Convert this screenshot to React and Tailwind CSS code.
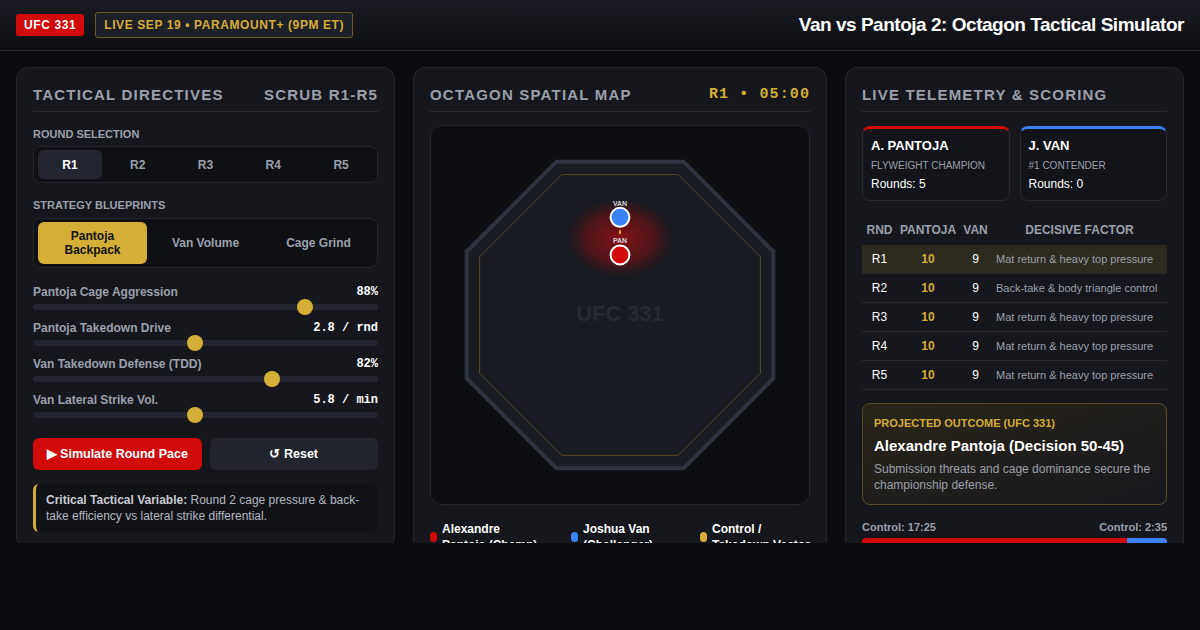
import { useState } from 'react'

const rounds = ['R1', 'R2', 'R3', 'R4', 'R5']

const blueprints = ['Pantoja Backpack', 'Van Volume', 'Cage Grind']

const sliders = [
  { label: 'Pantoja Cage Aggression', value: '88%', pos: 0.8 },
  { label: 'Pantoja Takedown Drive', value: '2.8 / rnd', pos: 0.467 },
  { label: 'Van Takedown Defense (TDD)', value: '82%', pos: 0.7 },
  { label: 'Van Lateral Strike Vol.', value: '5.8 / min', pos: 0.467 },
]

const scorecard = [
  { rnd: 'R1', pan: 10, van: 9, factor: 'Mat return & heavy top pressure' },
  { rnd: 'R2', pan: 10, van: 9, factor: 'Back-take & body triangle control' },
  { rnd: 'R3', pan: 10, van: 9, factor: 'Mat return & heavy top pressure' },
  { rnd: 'R4', pan: 10, van: 9, factor: 'Mat return & heavy top pressure' },
  { rnd: 'R5', pan: 10, van: 9, factor: 'Mat return & heavy top pressure' },
]

// octagon points, flat top, centred in a 381 box
function octagon(c, a) {
  const s = a * Math.tan(Math.PI / 8)
  return [
    [c - s, c - a], [c + s, c - a], [c + a, c - s], [c + a, c + s],
    [c + s, c + a], [c - s, c + a], [c - a, c + s], [c - a, c - s],
  ].map(p => p.join(',')).join(' ')
}

function PanelHeader({ left, right, rightClass }) {
  return (
    <div className="flex items-center justify-between border-b border-[#272a33] pt-[1px] pb-[6px]">
      <h2 className="text-[15px] leading-5 font-bold uppercase tracking-[1.2px] text-[#9ca0ab]">{left}</h2>
      {right && <span className={rightClass}>{right}</span>}
    </div>
  )
}

function OctagonMap() {
  return (
    <svg viewBox="0 0 381 381" className="block h-full w-full">
      <defs>
        <radialGradient id="glow" cx="50%" cy="50%" r="50%">
          <stop offset="0%" stopColor="#d10a0a" stopOpacity="0.6" />
          <stop offset="65%" stopColor="#a00a0a" stopOpacity="0.38" />
          <stop offset="100%" stopColor="#7a0808" stopOpacity="0.02" />
        </radialGradient>
      </defs>
      <polygon points={octagon(190.5, 154.5)} fill="#1a1c23" stroke="#2f3441" strokeWidth="4" />
      <polygon points={octagon(190.5, 141.5)} fill="none" stroke="#5a4b22" strokeWidth="1" />
      <text x="190.5" y="197" textAnchor="middle" fontSize="22" fontWeight="700" fill="#262a33" fontFamily="Liberation Sans, Arial, sans-serif">UFC 331</text>
      <ellipse cx="190.5" cy="113" rx="53" ry="39" fill="url(#glow)" />
      <rect x="189.5" y="105" width="2" height="4" fill="#d4af37" />
      <text x="190.5" y="81" textAnchor="middle" fontSize="7" fontWeight="700" fill="#d1d5db" fontFamily="Liberation Sans, Arial, sans-serif">VAN</text>
      <circle cx="190.5" cy="92" r="9.5" fill="#3b82f6" stroke="#ffffff" strokeWidth="2" />
      <text x="190.5" y="118" textAnchor="middle" fontSize="7" fontWeight="700" fill="#d1d5db" fontFamily="Liberation Sans, Arial, sans-serif">PAN</text>
      <circle cx="190.5" cy="130" r="9.5" fill="#d10a0a" stroke="#ffffff" strokeWidth="2" />
    </svg>
  )
}

export default function App() {
  const [round, setRound] = useState('R1')
  const [blueprint, setBlueprint] = useState('Pantoja Backpack')

  return (
    <div className="min-h-screen bg-[#0b0c10] font-['Liberation_Sans',Arial,sans-serif] text-white">
      <header className="flex h-[51px] items-center justify-between border-b border-[#272a33] bg-gradient-to-b from-[#1a1c23] to-[#0e0f13] px-4">
        <div className="flex items-center gap-[11px]">
          <span className="rounded-[3px] bg-[#d10a0a] px-2 py-[4px] text-[12px] leading-[14px] font-bold tracking-wider text-white">UFC 331</span>
          <span className="rounded-[3px] border border-[#6e5b26] bg-[#1e2028] px-2 py-[5px] text-[12px] leading-[14px] font-bold tracking-wider text-[#d4af37]">LIVE SEP 19 • PARAMOUNT+ (9PM ET)</span>
        </div>
        <h1 className="text-[19px] font-bold tracking-tight text-white">Van vs Pantoja 2: Octagon Tactical Simulator</h1>
      </header>

      <main className="h-[492px] overflow-hidden px-4 pt-4">
        <div className="grid grid-cols-[379px_414px_1fr] items-start gap-[18px]">
          {/* left */}
          <section className="rounded-xl border border-[#23262e] bg-[#16171c] p-4">
            <PanelHeader left="Tactical Directives" right="Scrub R1-R5" rightClass="text-[15px] leading-5 font-bold uppercase tracking-[1.2px] text-[#9ca0ab]" />

            <div className="mt-4 text-[11px] leading-3 font-bold uppercase text-[#9ca0ab]">Round Selection</div>
            <div className="mt-[6px] flex gap-1 rounded-lg border border-[#23262e] bg-[#0f1014] px-1 py-[3px]">
              {rounds.map(r => (
                <button
                  key={r}
                  onClick={() => setRound(r)}
                  className={`h-[29px] flex-1 rounded-md text-[12px] font-bold ${round === r ? 'bg-[#232630] text-white' : 'text-[#9ca0ab]'}`}
                >
                  {r}
                </button>
              ))}
            </div>

            <div className="mt-[16px] text-[11px] leading-3 font-bold uppercase text-[#9ca0ab]">Strategy Blueprints</div>
            <div className="mt-[7px] flex gap-1 rounded-lg border border-[#23262e] bg-[#0f1014] px-1 py-[3px]">
              {blueprints.map(b => (
                <button
                  key={b}
                  onClick={() => setBlueprint(b)}
                  className={`h-[42px] flex-1 rounded-md px-3 text-[12px] leading-[14px] font-bold ${blueprint === b ? 'bg-[#d4af37] text-[#111]' : 'text-[#9ca0ab]'}`}
                >
                  {b}
                </button>
              ))}
            </div>

            <div className="mt-[16px] flex flex-col gap-[10px]">
              {sliders.map(s => (
                <div key={s.label}>
                  <div className="flex h-4 items-center justify-between">
                    <span className="text-[12px] font-bold text-[#9ca0ab]">{s.label}</span>
                    <span className="font-mono text-[12px] font-bold text-white">{s.value}</span>
                  </div>
                  <div className="relative mt-[4px] h-[6px] rounded-full bg-[#232630]">
                    <span
                      className="absolute top-1/2 h-4 w-4 -translate-y-1/2 rounded-full bg-[#d4af37]"
                      style={{ left: `${s.pos * 330}px` }}
                    />
                  </div>
                </div>
              ))}
            </div>

            <div className="mt-[20px] grid grid-cols-2 gap-2">
              <button className="h-8 rounded-md bg-[#d10a0a] text-[12.5px] font-bold text-white">▶ Simulate Round Pace</button>
              <button className="h-8 rounded-md bg-[#22252e] text-[12.5px] font-bold text-white">↺ Reset</button>
            </div>

            <div className="mt-[14px] rounded-md border-l-[3px] border-[#d4af37] bg-[#111216] px-[10px] py-2 text-[12px] leading-4 text-[#b4b8c0]">
              <b className="text-[#c9ccd2]">Critical Tactical Variable:</b> Round 2 cage pressure &amp; back-take efficiency vs lateral strike differential.
            </div>
          </section>

          {/* center */}
          <section className="rounded-xl border border-[#23262e] bg-[#16171c] p-4">
            <PanelHeader left="Octagon Spatial Map" right="R1 • 05:00" rightClass="font-mono text-[15px] leading-5 font-bold tracking-[1.1px] text-[#d4af37]" />
            <div className="mt-[13px] aspect-square w-full overflow-hidden rounded-xl border border-[#23262e] bg-[#0e0f13]">
              <OctagonMap />
            </div>
            <div className="mt-[16px] flex gap-[10px] text-[12px] leading-4 font-bold text-white">
              <div className="flex w-[131px] shrink-0 items-center gap-[5px]">
                <span className="h-[10px] w-[7px] shrink-0 rounded-full bg-[#d10a0a]" />
                <span className="w-[100px] shrink-0">Alexandre Pantoja (Champ)</span>
              </div>
              <div className="flex w-[119px] shrink-0 items-center gap-[5px]">
                <span className="h-[10px] w-[7px] shrink-0 rounded-full bg-[#3b82f6]" />
                <span className="w-[100px] shrink-0">Joshua Van (Challenger)</span>
              </div>
              <div className="flex w-[111px] shrink-0 items-center gap-[5px]">
                <span className="h-[10px] w-[7px] shrink-0 rounded-full bg-[#d4af37]" />
                <span className="w-[100px] shrink-0">Control / Takedown Vector</span>
              </div>
            </div>
          </section>

          {/* right */}
          <section className="rounded-xl border border-[#23262e] bg-[#16171c] p-4">
            <PanelHeader left="Live Telemetry & Scoring" />

            <div className="mt-[14px] grid grid-cols-2 gap-[10px]">
              <div className="rounded-lg border border-[#272a33] border-t-[3px] border-t-[#d10a0a] bg-[#131419] px-2 pt-[7px] pb-[8px]">
                <div className="text-[13px] leading-5 font-bold text-white">A. PANTOJA</div>
                <div className="mt-[2px] text-[10px] leading-4 text-[#9ca0ab]">FLYWEIGHT CHAMPION</div>
                <div className="mt-[2px] text-[12px] leading-4 text-white">Rounds: 5</div>
              </div>
              <div className="rounded-lg border border-[#272a33] border-t-[3px] border-t-[#3b82f6] bg-[#131419] px-2 pt-[7px] pb-[8px]">
                <div className="text-[13px] leading-5 font-bold text-white">J. VAN</div>
                <div className="mt-[2px] text-[10px] leading-4 text-[#9ca0ab]">#1 CONTENDER</div>
                <div className="mt-[2px] text-[12px] leading-4 text-white">Rounds: 0</div>
              </div>
            </div>

            <div className="mt-[14px]">
              <div className="grid h-[30px] grid-cols-[35px_62px_33px_1fr] items-center text-center text-[12px] font-bold uppercase text-[#9ca0ab]">
                <span>Rnd</span>
                <span>Pantoja</span>
                <span>Van</span>
                <span>Decisive Factor</span>
              </div>
              {scorecard.map(row => (
                <div
                  key={row.rnd}
                  className={`grid h-[29px] grid-cols-[35px_62px_33px_1fr] items-center border-b border-[#272a33] ${row.rnd === round ? 'bg-[#2d2a20]' : ''}`}
                >
                  <span className="text-center text-[12px] text-white">{row.rnd}</span>
                  <span className="text-center text-[12px] font-bold text-[#d4af37]">{row.pan}</span>
                  <span className="text-center text-[12px] text-white">{row.van}</span>
                  <span className="truncate pl-1 text-[11px] text-[#9ca0ab]">{row.factor}</span>
                </div>
              ))}
            </div>

            <div className="mt-[13px] rounded-lg border border-[#5c4d22] bg-gradient-to-br from-[#2a2519] to-[#17181d] px-[11px] pt-[11px] pb-[11px]">
              <div className="text-[11px] leading-4 font-bold text-[#d4af37]">PROJECTED OUTCOME (UFC 331)</div>
              <div className="mt-[3px] text-[15px] leading-6 font-bold text-white">Alexandre Pantoja (Decision 50-45)</div>
              <p className="mt-[3px] text-[12px] leading-4 text-[#9ca0ab]">Submission threats and cage dominance secure the championship defense.</p>
            </div>

            <div className="mt-[14px] flex justify-between text-[11px] leading-4 font-bold text-[#9ca0ab]">
              <span>Control: 17:25</span>
              <span>Control: 2:35</span>
            </div>
            <div className="mt-[3px] flex h-[10px] overflow-hidden rounded">
              <div className="h-full bg-[#d10a0a]" style={{ width: '87%' }} />
              <div className="h-full flex-1 bg-[#3b82f6]" />
            </div>
          </section>
        </div>
      </main>
    </div>
  )
}
